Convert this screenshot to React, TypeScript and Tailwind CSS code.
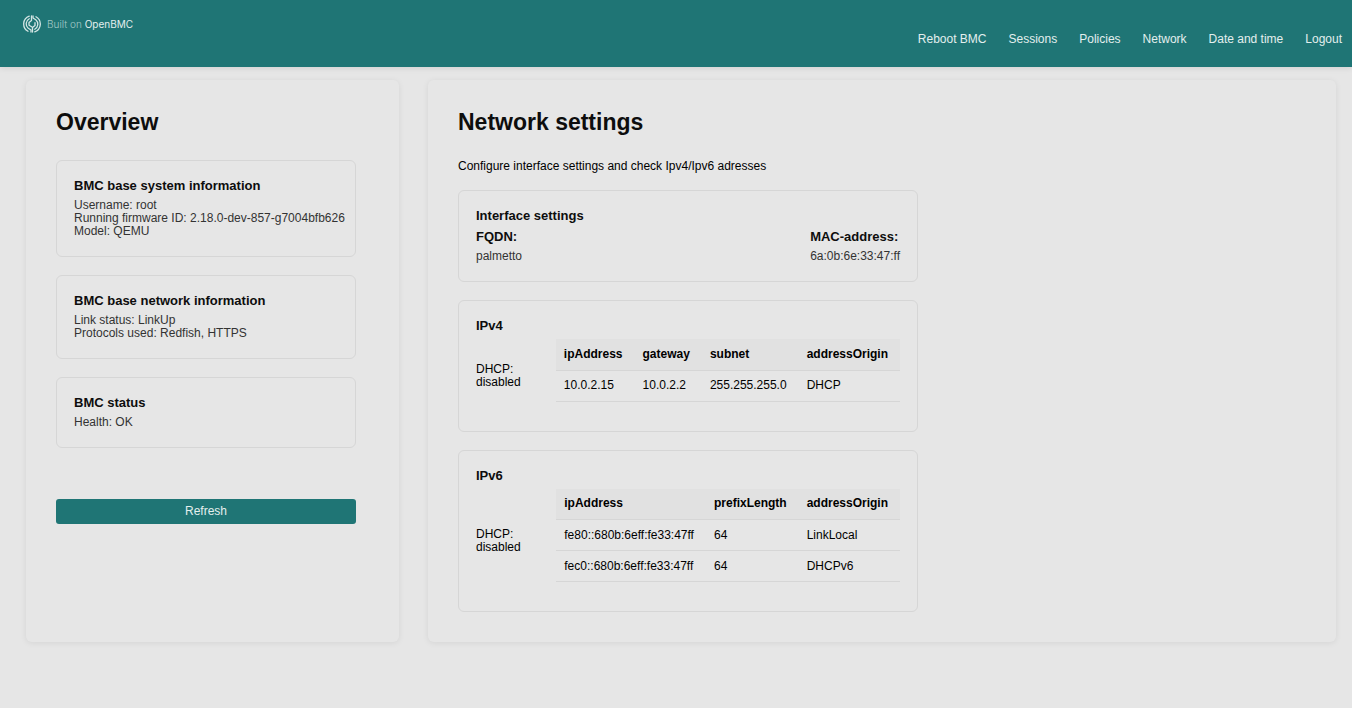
import type { ReactNode } from "react";

const navItems = ["Reboot BMC", "Sessions", "Policies", "Network", "Date and time", "Logout"];

function Logo() {
  return (
    <svg
      viewBox="0 0 36 36"
      className="size-[18px]"
      fill="none"
      stroke="#d5e6e5"
      strokeWidth="2.6"
      strokeLinecap="round"
      strokeLinejoin="round"
      aria-hidden="true"
    >
      <path d="M12.500 2.300A16.600 16.600 0 0 0 10 32.500" />
      <path d="M23.500 33.700A16.600 16.600 0 0 0 26 3.500" />
      <path d="M12.500 7.500A11.500 11.500 0 0 0 10.500 26.500l5.500 3.500V34" />
      <path d="M23.500 28.500A11.500 11.500 0 0 0 25.500 9.500l-5.500-3.500V2" />
      <path d="M17 2v9l-5 4v5.500l6 3.500" />
      <path d="M19 34v-9l5-4v-5.500" />
    </svg>
  );
}

function Panel({ title, className, children }: { title: string; className: string; children: ReactNode }) {
  return (
    <section className={`rounded-md p-[30px] shadow-[0_1px_6px_rgba(0,0,0,0.08)] ${className}`}>
      <h1 className="mb-[26px] text-[23px] leading-6 font-bold text-[#0d0d0d]">{title}</h1>
      {children}
    </section>
  );
}

function Box({ children }: { children: ReactNode }) {
  return (
    <div className="mb-[18px] rounded-md border border-[#d6d6d6] px-[17px] pt-[17px] pb-[18px] last:mb-0">
      {children}
    </div>
  );
}

function Heading({ children }: { children: ReactNode }) {
  return <h2 className="mb-1.5 text-[13px] leading-[15px] font-bold text-[#0d0d0d]">{children}</h2>;
}

function AddressBox({ title, columns, rows }: { title: string; columns: string[]; rows: string[][] }) {
  return (
    <Box>
      <Heading>{title}</Heading>
      <div className="flex items-center justify-between">
        <p>
          DHCP:
          <br />
          disabled
        </p>
        <table className="mb-[11px] border-collapse text-left" aria-label={title}>
          <thead>
            <tr className="h-[31px] border-b border-[#d6d6d6] bg-[#e1e1e1]">
              {columns.map((column) => (
                <th key={column} scope="col" className="py-0 pr-3 pl-2 font-bold">
                  {column}
                </th>
              ))}
            </tr>
          </thead>
          <tbody>
            {rows.map((row) => (
              <tr key={row[0]} className="h-[31px] border-b border-[#d6d6d6]">
                {row.map((cell, i) => (
                  <td key={columns[i]} className="py-0 pr-3 pl-2">
                    {cell}
                  </td>
                ))}
              </tr>
            ))}
          </tbody>
        </table>
      </div>
    </Box>
  );
}

export default function App() {
  return (
    <div className="min-h-screen bg-[#e6e6e6] font-['Liberation_Sans',Arial,sans-serif] text-xs leading-[13px] text-black">
      <header className="flex h-[67px] items-start justify-between bg-[#1f7575] pr-2.5 pl-[23px] shadow-[0_1px_6px_rgba(0,0,0,0.1)]">
        <div className="flex items-center gap-1.5 pt-3.5 leading-5">
          <Logo />
          <span className="font-[Inter,sans-serif] text-[10px] text-[#e3efee]">
            <span className="font-light text-[#a5cbc9]">Built on</span> OpenBMC
          </span>
        </div>
        <nav className="flex flex-wrap gap-[22px] pt-8">
          {navItems.map((item) => (
            <a key={item} href="#" className="leading-[14px] text-[#e3efee]">
              {item}
            </a>
          ))}
        </nav>
      </header>

      <main className="flex gap-[29px] pt-[13px] pr-4 pb-8 pl-[26px]">
        <Panel title="Overview" className="w-[373px] shrink-0">
          <div className="flex w-[300px] flex-col">
            <div className="text-[#333]">
              <Box>
                <Heading>BMC base system information</Heading>
                <p>Username: root</p>
                <p className="whitespace-nowrap">Running firmware ID: 2.18.0-dev-857-g7004bfb626</p>
                <p>Model: QEMU</p>
              </Box>
              <Box>
                <Heading>BMC base network information</Heading>
                <p>Link status: LinkUp</p>
                <p>Protocols used: Redfish, HTTPS</p>
              </Box>
              <Box>
                <Heading>BMC status</Heading>
                <p>Health: OK</p>
              </Box>
            </div>
            <button type="button" className="mt-[51px] h-[25px] rounded-[3px] bg-[#1f7575] text-[#e3efee]">
              Refresh
            </button>
          </div>
        </Panel>

        <Panel title="Network settings" className="min-w-0 flex-1">
          <p className="mb-[17px]">Configure interface settings and check Ipv4/Ipv6 adresses</p>
          <div className="max-w-[460px]">
            <Box>
              <Heading>Interface settings</Heading>
              <div className="flex justify-between text-[#333]">
                <div>
                  <Heading>FQDN:</Heading>
                  <p>palmetto</p>
                </div>
                <div>
                  <Heading>MAC-address:</Heading>
                  <p>6a:0b:6e:33:47:ff</p>
                </div>
              </div>
            </Box>
            <AddressBox
              title="IPv4"
              columns={["ipAddress", "gateway", "subnet", "addressOrigin"]}
              rows={[["10.0.2.15", "10.0.2.2", "255.255.255.0", "DHCP"]]}
            />
            <AddressBox
              title="IPv6"
              columns={["ipAddress", "prefixLength", "addressOrigin"]}
              rows={[
                ["fe80::680b:6eff:fe33:47ff", "64", "LinkLocal"],
                ["fec0::680b:6eff:fe33:47ff", "64", "DHCPv6"],
              ]}
            />
          </div>
        </Panel>
      </main>
    </div>
  );
}
